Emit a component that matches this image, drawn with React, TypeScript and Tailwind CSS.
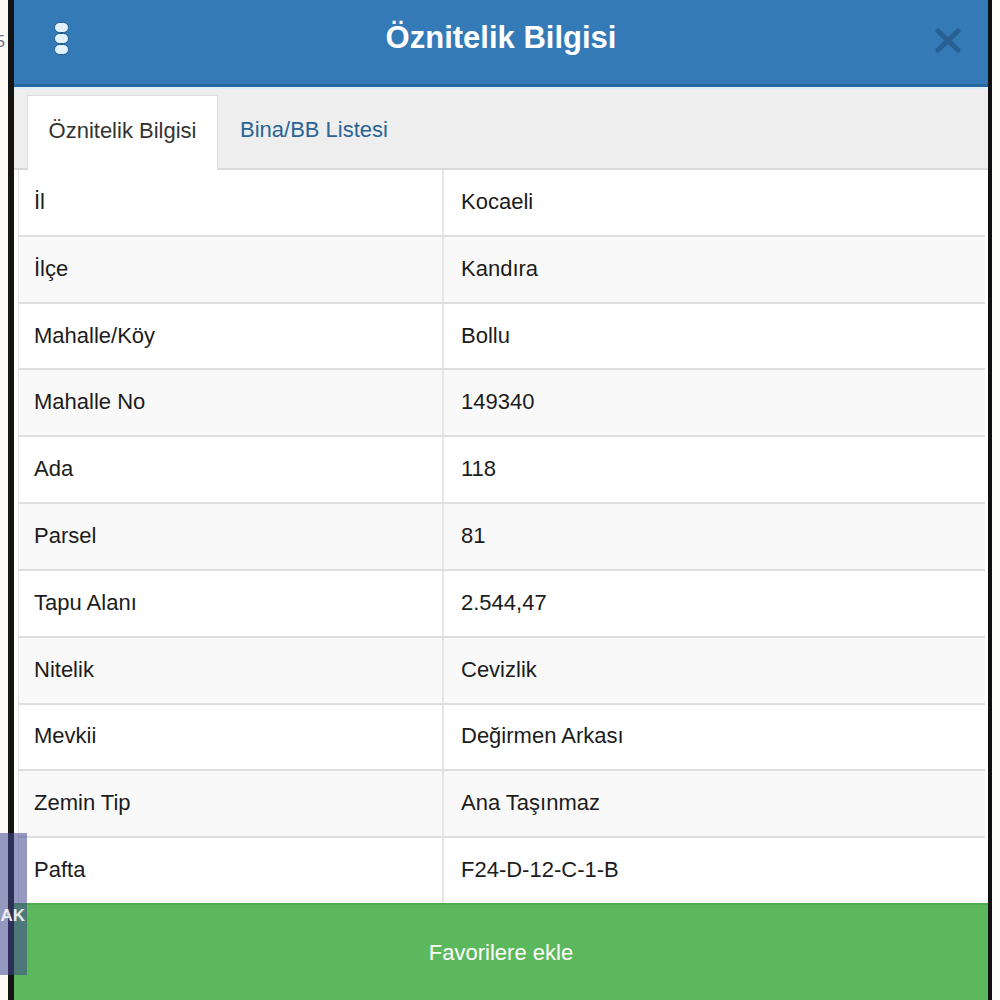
import React from "react";

const rows: [string, string][] = [
  ["İl", "Kocaeli"],
  ["İlçe", "Kandıra"],
  ["Mahalle/Köy", "Bollu"],
  ["Mahalle No", "149340"],
  ["Ada", "118"],
  ["Parsel", "81"],
  ["Tapu Alanı", "2.544,47"],
  ["Nitelik", "Cevizlik"],
  ["Mevkii", "Değirmen Arkası"],
  ["Zemin Tip", "Ana Taşınmaz"],
  ["Pafta", "F24-D-12-C-1-B"],
];

export default function App() {
  return (
    <div className="relative flex h-[1000px] w-[1000px] overflow-hidden bg-white font-['Liberation_Sans',Arial,sans-serif] text-[#333]">
      {/* page behind the dialog */}
      <div className="w-[8px] overflow-hidden bg-[#fbfaf5] pt-[30px]">
        <span className="-ml-[4px] block text-[16px] text-gray-500">5</span>
      </div>
      <div className="w-[6px] bg-[#141414]" />

      {/* dialog */}
      <div className="flex w-[974px] flex-col">
        <div className="relative flex h-[87px] shrink-0 items-center justify-center border-b-[3px] border-[#2866a0] bg-[#337ab7] pb-[7px]">
          <div className="absolute left-[40px] top-[22px] flex flex-col">
            <span className="h-[11px] w-[15px] rounded-full border border-[#1f5b8f] bg-[#e3f1fb]" />
            <span className="h-[11px] w-[15px] rounded-full border border-[#1f5b8f] bg-[#e3f1fb]" />
            <span className="h-[11px] w-[15px] rounded-full border border-[#1f5b8f] bg-[#e3f1fb]" />
          </div>
          <h1 className="text-[31px] font-bold text-white">Öznitelik Bilgisi</h1>
          <svg
            className="absolute right-[26px] top-[28px]"
            width="28"
            height="25"
            viewBox="0 0 28 25"
          >
            <path
              d="M4 3 L24 22 M24 3 L4 22"
              stroke="#2a5f92"
              strokeWidth="5"
              strokeLinecap="round"
            />
          </svg>
        </div>
        <div className="h-[2px] shrink-0 bg-[#dcf1f6]" />

        <div className="flex h-[81px] shrink-0 items-end border-b-2 border-[#d9d9d9] bg-[#eeeeee] pl-[13px]">
          <div className="-mb-[2px] flex h-[75px] w-[191px] items-center justify-center border border-b-0 border-[#dddddd] bg-white pb-[5px] text-[22px] text-[#333]">
            Öznitelik Bilgisi
          </div>
          <div className="flex h-[73px] items-center px-[22px] pb-[4px] text-[22px] text-[#2a6496]">
            Bina/BB Listesi
          </div>
        </div>

        <div className="ml-[4px] mr-[3px] flex flex-1 flex-col border-l border-[#e6e6e6]">
          {rows.map(([label, value], i) => (
            <div
              key={label}
              className={`flex flex-1 items-center text-[22px] text-[#1c1c1c] ${
                i > 0 ? "border-t-2 border-[#dedede]" : ""
              } ${i % 2 === 1 ? "bg-[#f9f9f9]" : "bg-white"}`}
            >
              <div className="flex h-full w-[425px] items-center border-r-2 border-[#e6e6e6] pb-[2px] pl-[15px]">
                {label}
              </div>
              <div className="pb-[2px] pl-[17px]">{value}</div>
            </div>
          ))}
        </div>

        <button
          type="button"
          className="flex h-[97px] shrink-0 items-center justify-center border-t-2 border-[#4cae4c] bg-[#5cb85c] text-[22px] text-white"
        >
          Favorilere ekle
        </button>
      </div>

      <div className="w-[4px] bg-[#111]" />
      <div className="flex-1 bg-[#fdfdfb]" />

      {/* overlay from the page behind */}
      <div className="absolute left-0 top-[833px] flex h-[142px] w-[27px] items-center justify-end overflow-hidden bg-[#3f4690]/55">
        <span className="mt-[24px] mr-[2px] text-[17px] font-bold text-white/85">AK</span>
      </div>
    </div>
  );
}
